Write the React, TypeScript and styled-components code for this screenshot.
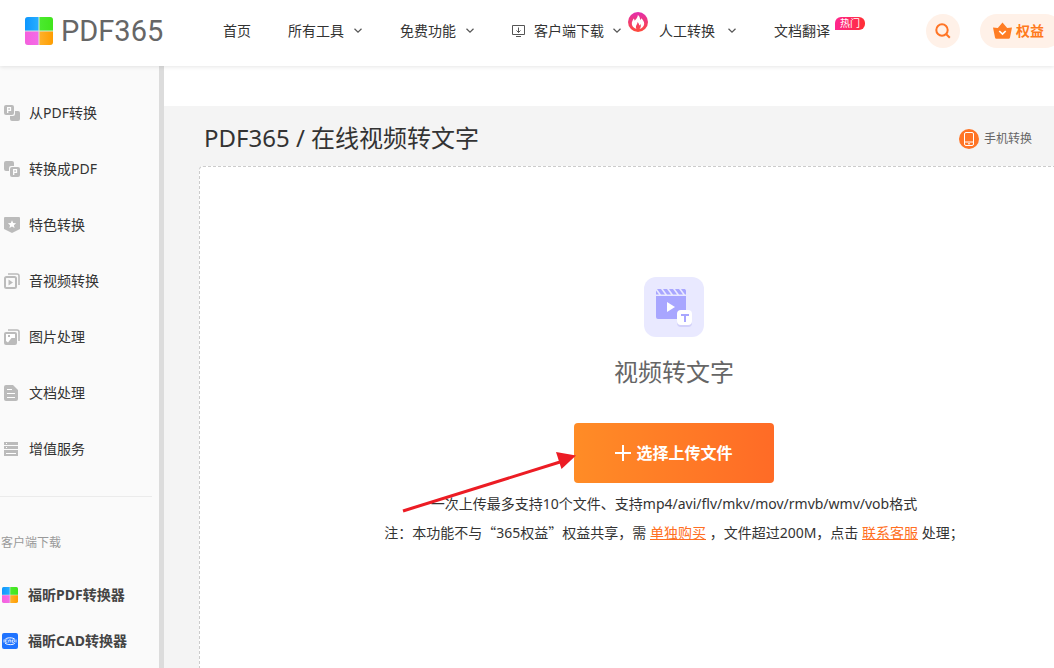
import React from "react";
import styled, { createGlobalStyle } from "styled-components";

const GlobalStyle = createGlobalStyle`
  *, *::before, *::after { box-sizing: border-box; }
  body {
    margin: 0;
    background: #fff;
    color: #333;
    font: 14px/20px "Noto Sans", "Noto Sans CJK SC", sans-serif;
  }
  a { color: inherit; text-decoration: none; }
  button { font: inherit; border: 0; padding: 0; cursor: pointer; }
  svg { display: block; flex: none; }
  ul { list-style: none; margin: 0; padding: 0; }
`;

const Page = styled.div`
  display: flex;
  flex-direction: column;
  min-height: 100vh;
  overflow: hidden;
`;

const Header = styled.header`
  position: relative;
  z-index: 2;
  display: flex;
  align-items: center;
  height: 66px;
  padding: 0 0 4px 25px;
  background: #fff;
  box-shadow: 0 1px 4px rgba(0, 0, 0, 0.1);
  white-space: nowrap;
`;

const Logo = styled.a`
  display: flex;
  align-items: center;
  flex: none;
  gap: 8px;
  width: 198px;
  color: #666;
  font: 400 29px/36px Roboto, sans-serif;
`;

const Nav = styled.nav`
  display: flex;
  flex: none;
  gap: 37px;
`;

const NavLink = styled.a<{ $gap?: number }>`
  position: relative;
  display: flex;
  align-items: center;
  gap: ${({ $gap = 9 }) => $gap}px;
`;

const FireBadge = styled.span`
  position: absolute;
  top: -9px;
  left: 116px;
`;

const HotBadge = styled.span`
  position: absolute;
  top: -4px;
  left: 61px;
  width: 30px;
  height: 13px;
  border-radius: 6px 6px 6px 0;
  background: linear-gradient(90deg, #ff2690, #ff2f33);
  color: #fff;
  font-size: 10px;
  line-height: 13px;
  text-align: center;
`;

const Actions = styled.div`
  display: flex;
  flex: none;
  gap: 20px;
  margin-left: 96px;
`;

const SearchButton = styled.button`
  display: grid;
  place-items: center;
  width: 34px;
  height: 34px;
  border-radius: 17px;
  background: #fff1e8;
`;

const VipButton = styled.button`
  display: flex;
  align-items: center;
  gap: 4px;
  height: 34px;
  padding: 0 18px 0 13px;
  border-radius: 17px;
  background: #fff1e8;
  color: #ff7a1c;
  font-weight: 700;
`;

const Body = styled.div`
  display: flex;
  flex: 1;
`;

const Sidebar = styled.aside`
  flex: none;
  width: 164px;
  padding-top: 19px;
  border-right: 5px solid #dcdcdc;
  background: #fafafa;
`;

const SideLink = styled.a`
  display: flex;
  align-items: center;
  gap: 9px;
  height: 56px;
  padding-left: 4px;
`;

const IconSlot = styled.svg`
  width: 16px;
  height: 16px;
`;

const Divider = styled.hr`
  height: 1px;
  margin: 19px 7px 0 0;
  border: 0;
  background: #ebebeb;
`;

const SideHeading = styled.h2`
  margin: 36px 0 19px;
  padding-left: 1px;
  color: #999;
  font-size: 12px;
  font-weight: 400;
  line-height: 20px;
`;

const AppLink = styled.a`
  display: flex;
  align-items: center;
  gap: 10px;
  height: 46px;
  padding-left: 2px;
  color: #444;
  font-weight: 700;
`;

const Main = styled.main`
  display: flex;
  flex: 1;
  flex-direction: column;
  min-width: 0;
  padding: 0 0 0 35px;
  border-top: 40px solid #fff;
  background: #f4f4f4;
`;

const TitleRow = styled.div`
  display: flex;
  align-items: center;
  justify-content: space-between;
  height: 60px;
  padding: 4px 22px 0 5px;
`;

const Title = styled.h1`
  margin: 0;
  font-size: 24px;
  font-weight: 400;
  line-height: 36px;
`;

const MobileLink = styled.a`
  display: flex;
  align-items: center;
  gap: 5px;
  padding-top: 2px;
  color: #666;
  font-size: 12px;
`;

const UploadPanel = styled.section`
  display: flex;
  flex: 1;
  flex-direction: column;
  align-items: center;
  min-width: 950px;
  padding-top: 110px;
  border: 1px dashed #ccc;
  border-bottom: 0;
  border-radius: 4px 4px 0 0;
  background: #fff;
`;

const ToolName = styled.h2`
  margin: 17px 0 33px;
  color: #666;
  font-size: 24px;
  font-weight: 400;
  line-height: 36px;
`;

const UploadArea = styled.div`
  position: relative;
  margin-bottom: 7px;
`;

const UploadButton = styled.button`
  display: flex;
  align-items: center;
  justify-content: center;
  gap: 5px;
  width: 200px;
  height: 60px;
  border-radius: 4px;
  background: linear-gradient(90deg, #ff8c26, #ff6b26);
  color: #fff;
  font-size: 16px;
  font-weight: 700;
`;

const Pointer = styled.svg`
  position: absolute;
  top: 28px;
  left: -174px;
  pointer-events: none;
`;

const Note = styled.p`
  margin: 0;
  line-height: 28px;

  a { color: #ff6f22; text-decoration: underline; }
`;

/* Curly quotes take the full-width form of the Chinese face. */
const Quote = styled.span`
  font-family: "Noto Sans CJK SC", sans-serif;
`;

const Chevron = () => (
  <svg width="10" height="10" viewBox="0 0 10 10" fill="none" stroke="#555" strokeWidth="1.2" aria-hidden>
    <path d="M1.5 2.8 5 6.2 8.5 2.8" />
  </svg>
);

const FourColour = ({ size }: { size: number }) => (
  <svg width={size} height={size} viewBox="0 0 28 28" aria-hidden>
    <defs>
      <linearGradient id="blue"><stop stopColor="#0d96ff" /><stop offset="1" stopColor="#27aeff" /></linearGradient>
      <linearGradient id="green"><stop stopColor="#4bea2f" /><stop offset="1" stopColor="#41e51c" /></linearGradient>
      <linearGradient id="pink"><stop stopColor="#f560dd" /><stop offset="1" stopColor="#f46be8" /></linearGradient>
      <linearGradient id="amber"><stop stopColor="#ffb12b" /><stop offset="1" stopColor="#ff9d00" /></linearGradient>
    </defs>
    <rect width="28" height="28" rx="3" fill="#d5e8dd" />
    <path d="M3 0h10.5v13.5H0V3a3 3 0 0 1 3-3z" fill="url(#blue)" />
    <path d="M14.5 0H25a3 3 0 0 1 3 3v10.5H14.5z" fill="url(#green)" />
    <path d="M0 14.5h13.5V28H3a3 3 0 0 1-3-3z" fill="url(#pink)" />
    <path d="M14.5 14.5H28V25a3 3 0 0 1-3 3H14.5z" fill="url(#amber)" />
  </svg>
);

const grey = "#bbb";

const sideIcons: Record<string, React.ReactNode> = {
  from: (
    <>
      <path d="M11 6h3a2 2 0 0 1 2 2v6a2 2 0 0 1-2 2H8a2 2 0 0 1-2-2v-3h3a2 2 0 0 0 2-2z" fill={grey} />
      <rect width="10" height="10" rx="2" fill={grey} />
      <path d="M3.7 8V2.7h2.8v2.6H3.7" fill="none" stroke="#fff" strokeWidth="1.3" />
    </>
  ),
  to: (
    <>
      <path d="M2 0h6a2 2 0 0 1 2 2v3H7a2 2 0 0 0-2 2v3H2a2 2 0 0 1-2-2V2a2 2 0 0 1 2-2z" fill={grey} />
      <rect x="6" y="6" width="10" height="10" rx="2" fill={grey} />
      <path d="M9.7 14V8.7h2.8v2.6H9.7" fill="none" stroke="#fff" strokeWidth="1.3" />
    </>
  ),
  star: (
    <>
      <path d="M1 0h14a1 1 0 0 1 1 1v11l-8 4-8-4V1a1 1 0 0 1 1-1z" fill={grey} />
      <path d="m8 3.2 1.2 2.7 2.9.3-2.2 2 .7 2.9L8 9.6l-2.6 1.5.7-2.9-2.2-2 2.9-.3z" fill="#fff" />
    </>
  ),
  media: (
    <>
      <path d="M4 1h9a2 2 0 0 1 2 2v9" fill="none" stroke={grey} strokeWidth="1.6" />
      <rect x="1" y="4" width="11" height="11" rx="1.5" fill="none" stroke={grey} strokeWidth="2" />
      <path d="M4.5 6.5v6l4.500-3z" fill={grey} />
    </>
  ),
  image: (
    <>
      <path d="M4 1h9a2 2 0 0 1 2 2v9" fill="none" stroke={grey} strokeWidth="1.6" />
      <rect y="3" width="13" height="13" rx="2" fill={grey} />
      <path d="M2 5h9v4L7.500 9 4 13.500 2 12z" fill="#fff" />
      <rect x="4" y="6" width="2" height="2" fill={grey} />
    </>
  ),
  doc: (
    <>
      <path d="M2 0h7l5 5v9a2 2 0 0 1-2 2H2a2 2 0 0 1-2-2V2a2 2 0 0 1 2-2z" fill={grey} />
      <path d="M3 4.5h5M3 8.5h8M3 12.5h8" stroke="#fff" />
    </>
  ),
  service: (
    <>
      <path d="M0 1h14v3H0zM0 5h14v3H0zM0 9h14v6H0z" fill={grey} />
      <path d="M2 2.5h1M2 6.5h1M2 12.5h10" stroke="#fff" />
    </>
  ),
};

const sideItems = [
  ["from", "从PDF转换"],
  ["to", "转换成PDF"],
  ["star", "特色转换"],
  ["media", "音视频转换"],
  ["image", "图片处理"],
  ["doc", "文档处理"],
  ["service", "增值服务"],
];

const FireIcon = () => (
  <svg width="20" height="20" viewBox="0 0 20 20" aria-hidden>
    <defs>
      <linearGradient id="fire" x2="0" y2="1"><stop stopColor="#e32cae" /><stop offset="1" stopColor="#ff4b38" /></linearGradient>
    </defs>
    <circle cx="10" cy="10" r="10" fill="url(#fire)" />
    <path d="M8.5 17C5.500 16 3.500 13.800 3.800 11c.2-2 1.400-3 1.800-4.500.7.700 1 1.300 1.100 2.200C8 7.200 9.700 5.500 9.900 3c1.600 1.400 2.300 3.200 2.200 5 .7-.4 1-.9 1.200-1.700 1.700 1.800 3 3.500 2.900 5.500-.1 2.500-1.900 4.500-4.700 5.200 1.500-1.700 1.700-3 .8-4.900-.3.800-.6 1.100-1.100 1.400-.2-1.700-.7-2.700-1.700-3.500.1 2.500-2.700 3.800-1 7z" fill="#fff" />
  </svg>
);

const DownloadIcon = () => (
  <svg width="14" height="14" viewBox="0 0 14 14" fill="none" stroke="#555" aria-hidden>
    <path d="M.5 1.500h12v9H.5zM6.500 3.500v5M4.500 6.500l2 2 2-2M4 12.500h5" />
  </svg>
);

const ToolIcon = () => (
  <svg width="60" height="60" viewBox="0 0 60 60" aria-hidden>
    <rect width="60" height="60" rx="12" fill="#e9e9ff" />
    <path d="M12 19h30v21a2 2 0 0 1-2 2H14a2 2 0 0 1-2-2z" fill="#a8a6ff" />
    <path d="M12 13.500v4h3zM13 12h4l4 5.500h-4zM19 12h4l4 5.500h-4zM25 12h4l4 5.500h-4zM31 12h4l4 5.500h-4zM37 12h4l1 1.500v4h-1z" fill="#a8a6ff" />
    <path d="M23 25v10l8-5z" fill="#fff" />
    <rect x="33" y="35" width="15" height="15" rx="4" fill="#d3d1fa" />
    <rect x="33" y="33" width="15" height="15" rx="4" fill="#fff" />
    <path d="M37 38h8M41 37v8" stroke="#a8a6ff" strokeWidth="2" />
  </svg>
);

export default function App() {
  return (
    <>
      <GlobalStyle />
      <Page>
        <Header>
          <Logo href="#">
            <FourColour size={28} />
            PDF365
          </Logo>
          <Nav>
            <NavLink href="#">首页</NavLink>
            <NavLink href="#">所有工具<Chevron /></NavLink>
            <NavLink href="#">免费功能<Chevron /></NavLink>
            <NavLink href="#" $gap={8}>
              <DownloadIcon />客户端下载<Chevron />
              <FireBadge><FireIcon /></FireBadge>
            </NavLink>
            <NavLink href="#" $gap={12}>人工转换<Chevron /></NavLink>
            <NavLink href="#">文档翻译<HotBadge>热门</HotBadge></NavLink>
          </Nav>
          <Actions>
            <SearchButton aria-label="搜索">
              <svg width="16" height="16" viewBox="0 0 16 16" fill="none" stroke="#ff7526" strokeWidth="2">
                <circle cx="7" cy="7" r="5.700" />
                <path d="m11 11 3.800 3.800" />
              </svg>
            </SearchButton>
            <VipButton>
              <svg width="19" height="18" viewBox="0 0 19 18" aria-hidden>
                <path d="M0 5.500 4.800 6 9.500.5 14.200 6l4.800-.5-2 10a1.500 1.500 0 0 1-1.500 1.200h-12A1.500 1.500 0 0 1 2 15.500z" fill="#ff7d24" />
                <path d="m6.300 9 3.200 3 3.200-3" fill="none" stroke="#fff" strokeWidth="1.700" />
              </svg>
              权益
            </VipButton>
          </Actions>
        </Header>
        <Body>
          <Sidebar>
            <ul>
              {sideItems.map(([icon, label]) => (
                <li key={icon}>
                  <SideLink href="#">
                    <IconSlot viewBox="0 0 16 16" aria-hidden>{sideIcons[icon]}</IconSlot>
                    {label}
                  </SideLink>
                </li>
              ))}
            </ul>
            <Divider />
            <SideHeading>客户端下载</SideHeading>
            <AppLink href="#"><FourColour size={16} />福昕PDF转换器</AppLink>
            <AppLink href="#">
              <IconSlot viewBox="0 0 16 16" fill="none" stroke="#fff" aria-hidden>
                <rect width="16" height="16" rx="2" fill="#1f73ff" stroke="none" />
                <path d="M3 6.500C4 4.500 11 4 13 6.500M13 10c-1 2-8 2.300-10 0" />
                <path d="M5.500 7H3.300v2.200h2.200M6.800 9.600V7h2v2.600M10.300 7h1.500l.8.700v1l-.8.600h-1.500z" strokeWidth=".8" />
                <path d="M2 6.500v3M14 6.500v3" strokeWidth=".8" />
              </IconSlot>
              福昕CAD转换器
            </AppLink>
          </Sidebar>
          <Main>
            <TitleRow>
              <Title>PDF365 / 在线视频转文字</Title>
              <MobileLink href="#">
                <svg width="20" height="20" viewBox="0 0 20 20" aria-hidden>
                  <circle cx="10" cy="10" r="10" fill="#ff7526" />
                  <rect x="5.500" y="3.500" width="9" height="13" rx="1.500" fill="none" stroke="#fff" />
                  <path d="M5.500 13h9M9 14.800h2" stroke="#fff" />
                </svg>
                手机转换
              </MobileLink>
            </TitleRow>
            <UploadPanel>
              <ToolIcon />
              <ToolName>视频转文字</ToolName>
              <UploadArea>
                <UploadButton>
                  <svg width="16" height="16" viewBox="0 0 16 16" stroke="#fff" strokeWidth="2" aria-hidden>
                    <path d="M0 8h16M8 0v16" />
                  </svg>
                  选择上传文件
                </UploadButton>
                <Pointer width="178" height="64" viewBox="0 0 178 64" aria-hidden>
                  <path d="M3 60 160 11" stroke="#ec1c24" strokeWidth="3" />
                  <path d="M176 4.500 156 1l5.500 17z" fill="#ec1c24" />
                </Pointer>
              </UploadArea>
              <Note>一次上传最多支持10个文件、支持mp4/avi/flv/mkv/mov/rmvb/wmv/vob格式</Note>
              <Note>
                注：本功能不与<Quote>“</Quote>365权益<Quote>”</Quote>权益共享，需 <a href="#">单独购买</a> ，文件超过200M，点击 <a href="#">联系客服</a> 处理；
              </Note>
            </UploadPanel>
          </Main>
        </Body>
      </Page>
    </>
  );
}
